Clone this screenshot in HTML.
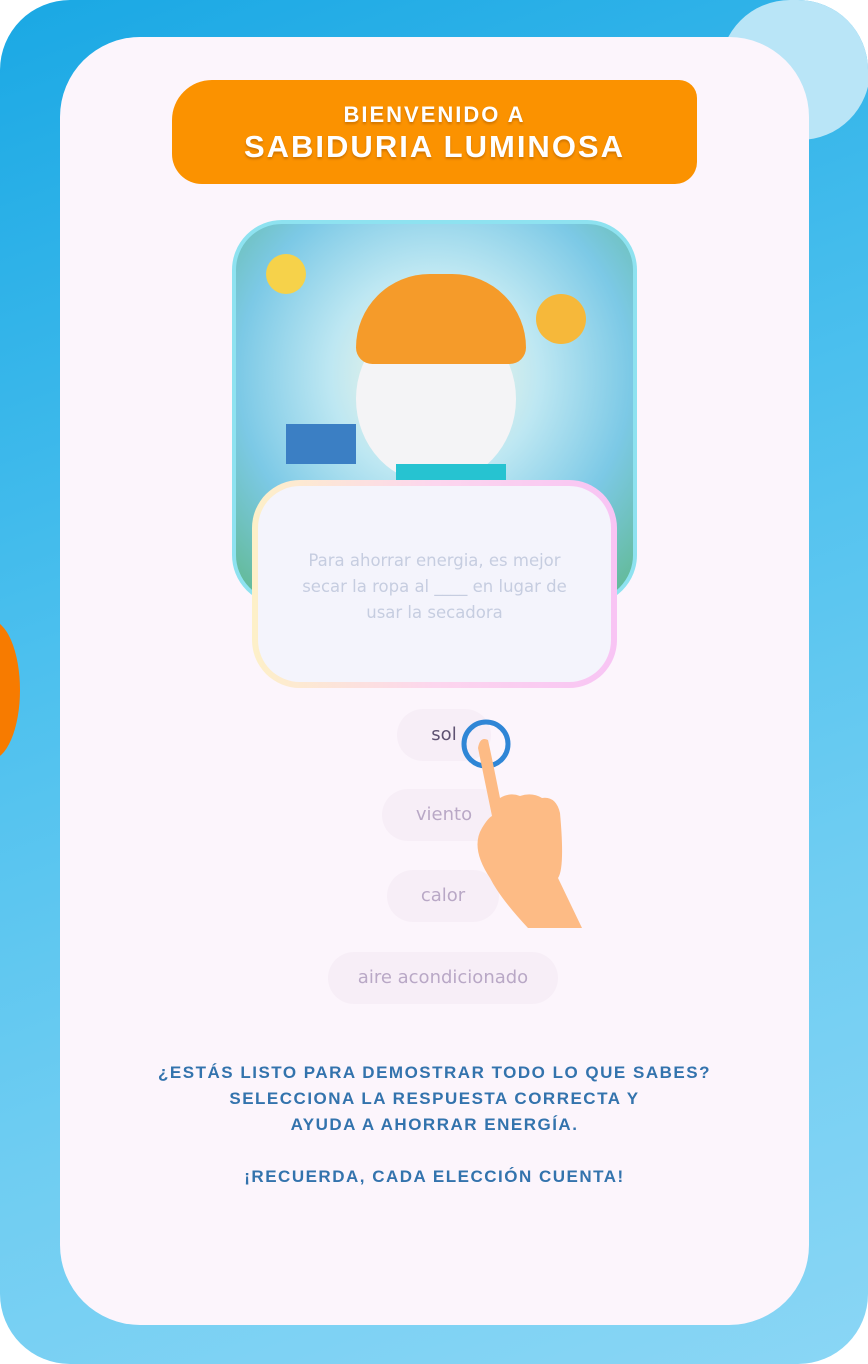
<!DOCTYPE html>
<html><head><meta charset="utf-8"><style>
*{margin:0;padding:0;box-sizing:border-box}
body{width:868px;height:1364px;background:#fff;position:relative;overflow:hidden;font-family:"Liberation Sans",sans-serif}
.outer{position:absolute;left:0;top:0;width:868px;height:1364px;border-radius:70px;background:linear-gradient(160deg,#1aa8e4 0%,#4cc0ee 40%,#6fcdf2 70%,#8ad6f5 100%);overflow:hidden}
.card{position:absolute;left:60px;top:37px;width:749px;height:1288px;border-radius:80px;background:#fcf5fc}
.banner{position:absolute;left:172px;top:80px;width:525px;height:104px;background:#fb9200;border-radius:40px 18px 22px 30px;text-align:center;color:#fff;font-weight:bold;letter-spacing:2px;text-shadow:0 2px 2px rgba(120,60,0,.35)}
.banner .a{position:absolute;left:0;right:0;top:22px;font-size:22px}
.banner .b{position:absolute;left:0;right:0;top:49px;font-size:31px}
.pic{position:absolute;left:232px;top:220px;width:405px;height:385px;border-radius:50px;border:4px solid #8ee2f0;background:radial-gradient(circle at 50% 40%,#fff8e0 0,#bde7f2 35%,#7cc9e6 65%,#5fb88c 100%);overflow:hidden}
.q{position:absolute;left:252px;top:480px;width:365px;height:208px;border-radius:48px;padding:6px;background:linear-gradient(90deg,#fdf0c8,#fcd6ee,#f8c4f4)}
.q div{width:100%;height:100%;border-radius:42px;background:#f4f4fc;color:#c6cde0;font-family:"Comic Sans MS","DejaVu Sans",sans-serif;font-size:16.5px;line-height:26px;text-align:center;padding-top:62px}
.btn{position:absolute;height:52px;border-radius:26px;background:#f7eef7;color:#b9a8c6;font-family:"DejaVu Sans",sans-serif;font-size:18px;line-height:52px;text-align:center}
.txt{position:absolute;left:60px;width:749px;text-align:center;color:#3373ad;font-size:17px;letter-spacing:1.5px;font-weight:bold;line-height:26px}
</style></head><body>
<div class="outer">
<div style="position:absolute;left:720px;top:0;width:150px;height:140px;border-radius:70px;background:#b9e5f7"></div>
<div style="position:absolute;left:-40px;top:620px;width:60px;height:140px;border-radius:50%;background:#f77b00"></div>
<div class="card"></div>
</div>
<div class="banner"><div class="a">BIENVENIDO A</div><div class="b">SABIDURIA LUMINOSA</div></div>
<div class="pic">
<div style="position:absolute;left:120px;top:90px;width:160px;height:170px;border-radius:50%;background:#f4f4f6"></div>
<div style="position:absolute;left:120px;top:50px;width:170px;height:90px;border-radius:90px 90px 20px 20px;background:#f59b2a"></div>
<div style="position:absolute;left:160px;top:240px;width:110px;height:60px;background:#26c3d1"></div>
<div style="position:absolute;left:30px;top:30px;width:40px;height:40px;border-radius:50%;background:#f6d24a"></div>
<div style="position:absolute;left:300px;top:70px;width:50px;height:50px;border-radius:50%;background:#f6b83a"></div>
<div style="position:absolute;left:50px;top:200px;width:70px;height:40px;background:#3b7fc4"></div>
</div>
<div class="q"><div>Para ahorrar energia, es mejor<br>secar la ropa al ____ en lugar de<br>usar la secadora</div></div>
<div class="btn" style="left:397px;top:709px;width:94px;color:#5e5272">sol</div>
<div class="btn" style="left:382px;top:789px;width:124px">viento</div>
<div class="btn" style="left:387px;top:870px;width:112px">calor</div>
<div class="btn" style="left:328px;top:952px;width:230px">aire acondicionado</div>
<svg style="position:absolute;left:460px;top:718px" width="130" height="212" viewBox="0 0 130 212">
<circle cx="26" cy="26" r="22" fill="none" stroke="#2f86d6" stroke-width="5"/>
<path d="M18 30 Q20 18 28 22 Q32 40 40 80 Q50 74 60 78 Q72 74 82 80 Q96 78 100 95 Q105 150 98 160 L122 210 L68 210 Q40 180 30 160 Q10 130 22 110 Q28 100 32 98 Z" fill="#fdbb85"/>
</svg>
<div class="txt" style="top:1060px">¿ESTÁS LISTO PARA DEMOSTRAR TODO LO QUE SABES?<br>SELECCIONA LA RESPUESTA CORRECTA Y<br>AYUDA A AHORRAR ENERGÍA.</div>
<div class="txt" style="top:1164px">¡RECUERDA, CADA ELECCIÓN CUENTA!</div>
</body></html>
